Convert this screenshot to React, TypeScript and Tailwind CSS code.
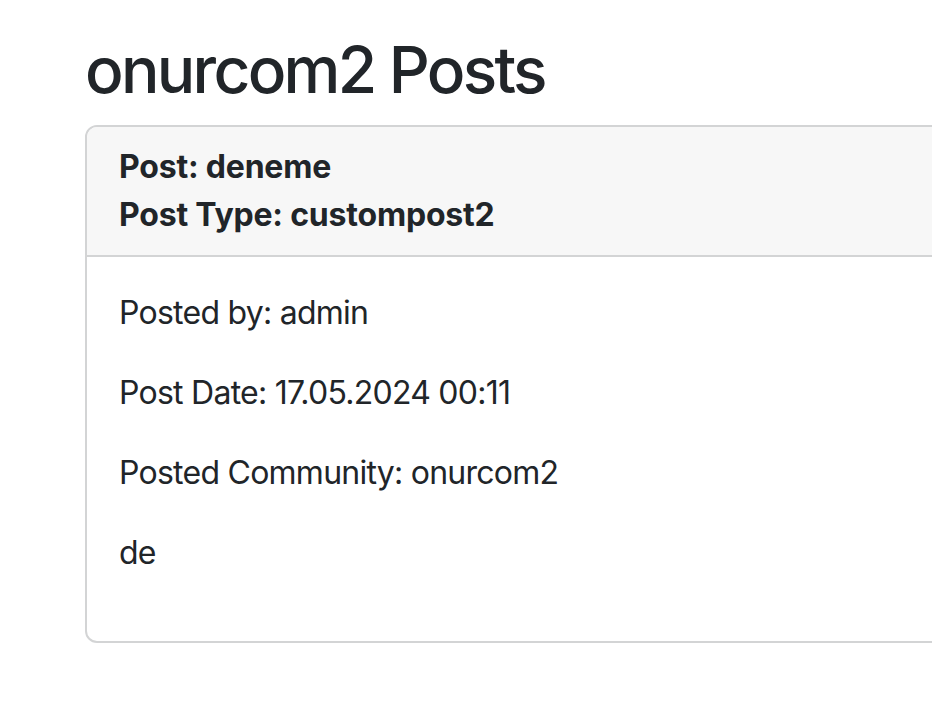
import React from "react";

export default function App() {
  return (
    <div
      className="w-[932px] h-[710px] overflow-hidden bg-white text-[#212529]"
      style={{ fontFamily: "Inter, 'Noto Sans', sans-serif" }}
    >
      <div className="pl-[85px] pt-[32px]">
        <h1 className="text-[64px] leading-[1.2] font-medium mb-[16px] tracking-[-2.7px]">onurcom2 Posts</h1>
        <div className="w-[1200px] border-2 border-[#d3d4d5] rounded-[12px] overflow-hidden">
          <div className="bg-[#f7f7f7] border-b-2 border-[#d3d4d5] px-[32px] py-[16px] text-[32px] leading-[48px] font-bold tracking-[-0.2px]">
            <div>Post: deneme</div>
            <div>Post Type: custompost2</div>
          </div>
          <div className="p-[32px] text-[32px] leading-[48px] tracking-[-0.75px]">
            <p className="mb-[32px]">Posted by: admin</p>
            <p className="mb-[32px]">Post Date: 17.05.2024 00:11</p>
            <p className="mb-[32px]">Posted Community: onurcom2</p>
            <p className="mb-[32px]">de</p>
          </div>
        </div>
      </div>
    </div>
  );
}
